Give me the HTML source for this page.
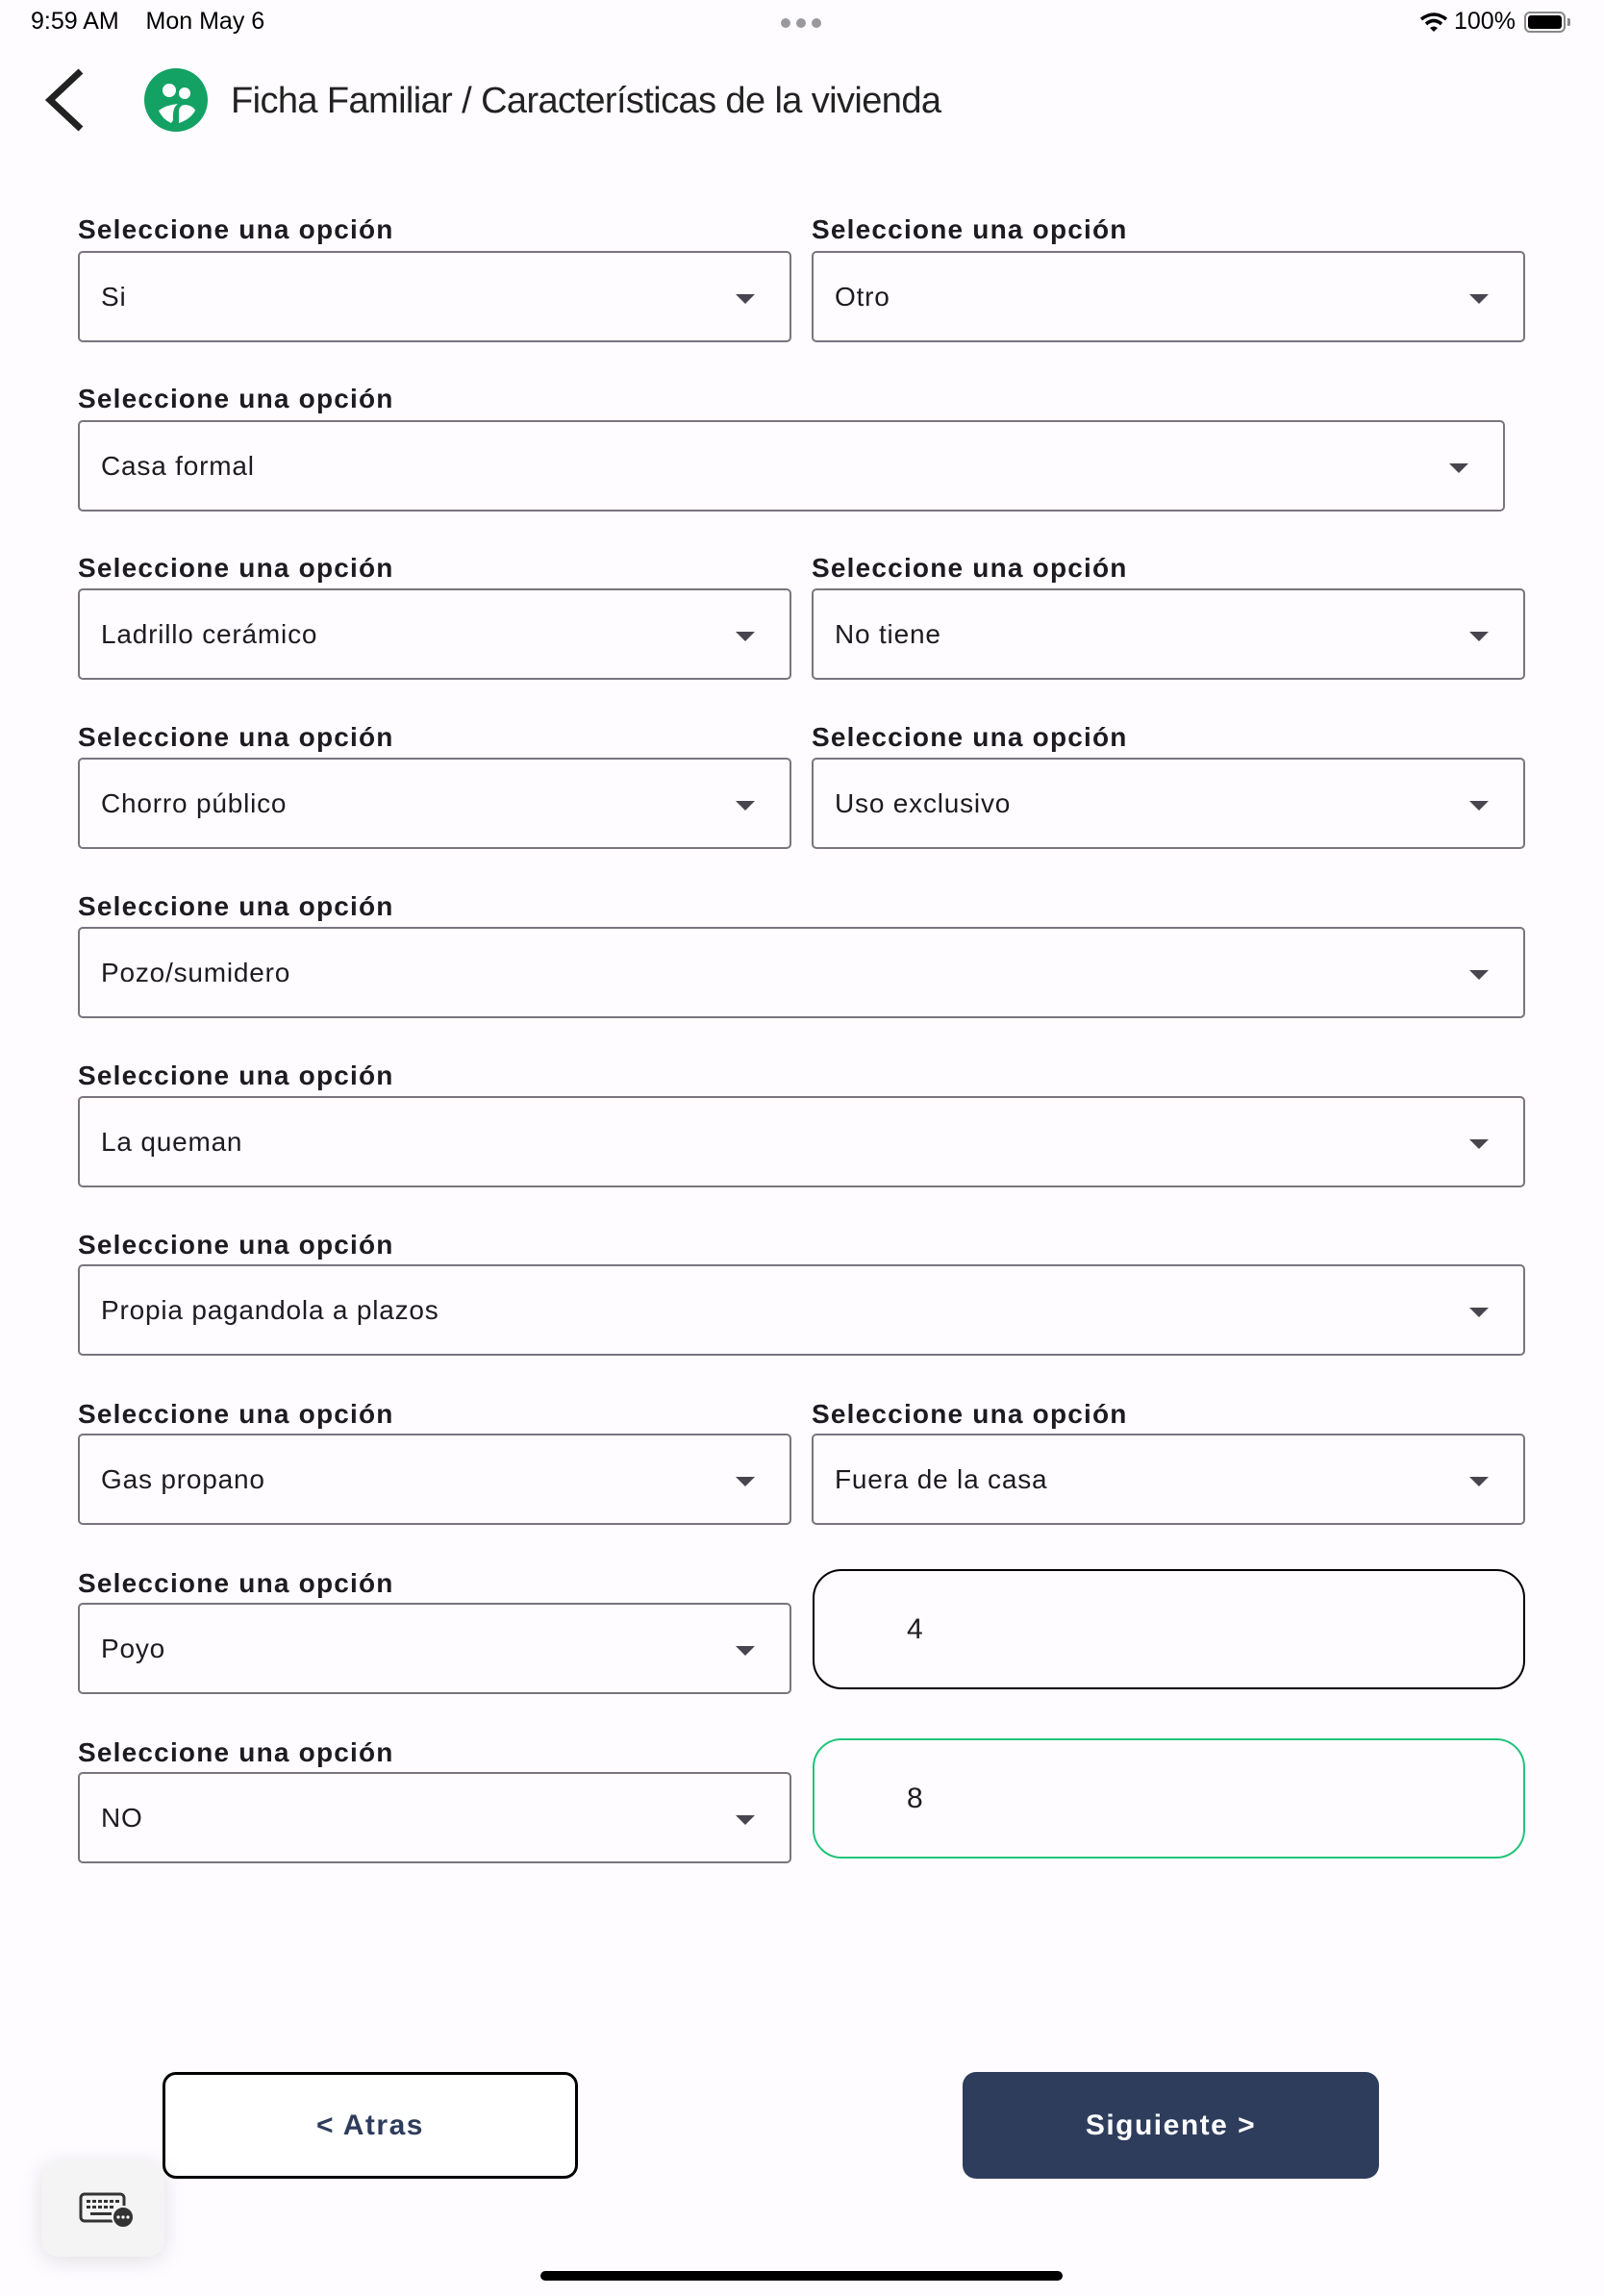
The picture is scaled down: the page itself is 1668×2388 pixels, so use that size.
<!DOCTYPE html>
<html><head><meta charset="utf-8"><style>
*{margin:0;padding:0;box-sizing:border-box}
body{width:1668px;height:2388px;background:#fefcff;position:relative;overflow:hidden;font-family:"Liberation Sans",sans-serif;color:#1d1b20}
.a{position:absolute}
.lbl{position:absolute;font-size:28px;font-weight:bold;letter-spacing:1.2px;color:#1d1b20;line-height:32px}
.sel{position:absolute;height:95px;border:2px solid #79747e;border-radius:5px;font-size:28px;letter-spacing:0.8px;line-height:91px;padding-left:22px;color:#1d1b20}
.sel::after{content:"";position:absolute;right:36px;top:43px;border-left:10px solid transparent;border-right:10px solid transparent;border-top:10px solid #49454f}
.num{position:absolute;left:845px;width:741px;height:125px;border-radius:30px;font-size:30px;line-height:121px;padding-left:96px}
</style></head><body>
<div class="a" style="left:32px;top:7px;font-size:25px;line-height:30px;color:#000">9:59 AM&nbsp;&nbsp;&nbsp;&nbsp;Mon May 6</div>
<div class="a" style="left:812px;top:19px;width:44px;height:10px">
<div class="a" style="left:0;top:0;width:10px;height:10px;border-radius:50%;background:#9a9a9e"></div>
<div class="a" style="left:16px;top:0;width:10px;height:10px;border-radius:50%;background:#9a9a9e"></div>
<div class="a" style="left:32px;top:0;width:10px;height:10px;border-radius:50%;background:#9a9a9e"></div></div>
<svg class="a" style="left:1476px;top:12px" width="30" height="22" viewBox="0 0 30 22"><path d="M2 8 Q15 -2 28 8" stroke="#000" stroke-width="3.5" fill="none"/><path d="M7 13 Q15 6 23 13" stroke="#000" stroke-width="3.5" fill="none"/><path d="M11 17 L15 21 L19 17 Q15 14 11 17Z" fill="#000"/></svg>
<div class="a" style="left:1512px;top:7px;font-size:25px;line-height:30px;color:#000">100%</div>
<div class="a" style="left:1585px;top:12px;width:43px;height:22px;border:2px solid #888;border-radius:6px;padding:2px"><div style="width:100%;height:100%;background:#000;border-radius:3px"></div></div>
<div class="a" style="left:1630px;top:19px;width:3px;height:8px;background:#888;border-radius:0 2px 2px 0"></div>
<svg class="a" style="left:44px;top:70px" width="46" height="68" viewBox="0 0 46 68"><path d="M40 4 L8 34 L40 64" stroke="#222" stroke-width="7" fill="none"/></svg>
<svg class="a" style="left:149px;top:70px" width="68" height="68" viewBox="0 0 68 68"><circle cx="34" cy="34" r="33" fill="#13a263"/><circle cx="27" cy="24" r="7" fill="#fff"/><circle cx="43" cy="27" r="6" fill="#fff"/><path d="M16 45 Q24 39 36 38 Q30 42 31 55 L29 58 Q20 54 16 45Z" fill="#fff"/><path d="M37 58 L37 45 Q38 39 44 39 Q52 40 54 45 Q49 54 37 58Z" fill="#fff"/></svg>
<div class="a" style="left:240px;top:82px;font-size:38px;line-height:46px;color:#222;letter-spacing:-0.6px">Ficha Familiar / Características de la vivienda</div>

<div class="lbl" style="left:81px;top:223px">Seleccione una opción</div>
<div class="sel" style="left:81px;top:261px;width:742px">Si</div>
<div class="lbl" style="left:844px;top:223px">Seleccione una opción</div>
<div class="sel" style="left:844px;top:261px;width:742px">Otro</div>

<div class="lbl" style="left:81px;top:399px">Seleccione una opción</div>
<div class="sel" style="left:81px;top:437px;width:1484px">Casa formal</div>

<div class="lbl" style="left:81px;top:575px">Seleccione una opción</div>
<div class="sel" style="left:81px;top:612px;width:742px">Ladrillo cerámico</div>
<div class="lbl" style="left:844px;top:575px">Seleccione una opción</div>
<div class="sel" style="left:844px;top:612px;width:742px">No tiene</div>

<div class="lbl" style="left:81px;top:751px">Seleccione una opción</div>
<div class="sel" style="left:81px;top:788px;width:742px">Chorro público</div>
<div class="lbl" style="left:844px;top:751px">Seleccione una opción</div>
<div class="sel" style="left:844px;top:788px;width:742px">Uso exclusivo</div>

<div class="lbl" style="left:81px;top:927px">Seleccione una opción</div>
<div class="sel" style="left:81px;top:964px;width:1505px">Pozo/sumidero</div>

<div class="lbl" style="left:81px;top:1103px">Seleccione una opción</div>
<div class="sel" style="left:81px;top:1140px;width:1505px">La queman</div>

<div class="lbl" style="left:81px;top:1279px">Seleccione una opción</div>
<div class="sel" style="left:81px;top:1315px;width:1505px">Propia pagandola a plazos</div>

<div class="lbl" style="left:81px;top:1455px">Seleccione una opción</div>
<div class="sel" style="left:81px;top:1491px;width:742px">Gas propano</div>
<div class="lbl" style="left:844px;top:1455px">Seleccione una opción</div>
<div class="sel" style="left:844px;top:1491px;width:742px">Fuera de la casa</div>

<div class="lbl" style="left:81px;top:1631px">Seleccione una opción</div>
<div class="sel" style="left:81px;top:1667px;width:742px">Poyo</div>
<div class="num" style="top:1632px;border:2px solid #000">4</div>

<div class="lbl" style="left:81px;top:1807px">Seleccione una opción</div>
<div class="sel" style="left:81px;top:1843px;width:742px">NO</div>
<div class="num" style="top:1808px;border:2px solid #22c47a">8</div>

<div class="a" style="left:169px;top:2155px;width:432px;height:111px;border:3px solid #000;border-radius:14px;background:#fff;text-align:center;line-height:105px;font-size:30px;font-weight:bold;color:#2e3c5c;letter-spacing:1.5px">&lt; Atras</div>
<div class="a" style="left:1001px;top:2155px;width:433px;height:111px;border-radius:14px;background:#2e3d5c;text-align:center;line-height:111px;font-size:30px;font-weight:bold;color:#fff;letter-spacing:1.5px">Siguiente &gt;</div>

<div class="a" style="left:43px;top:2248px;width:128px;height:99px;border-radius:18px;background:#f4f4f5;box-shadow:0 4px 24px rgba(0,0,0,0.12)"></div>
<svg class="a" style="left:82px;top:2280px" width="60" height="38" viewBox="0 0 60 38"><rect x="2" y="2" width="45" height="28" rx="4" fill="none" stroke="#333" stroke-width="3"/><g fill="#333"><rect x="8" y="8" width="4" height="3"/><rect x="14" y="8" width="4" height="3"/><rect x="20" y="8" width="4" height="3"/><rect x="26" y="8" width="4" height="3"/><rect x="32" y="8" width="4" height="3"/><rect x="38" y="8" width="4" height="3"/><rect x="8" y="14" width="4" height="3"/><rect x="14" y="14" width="4" height="3"/><rect x="20" y="14" width="4" height="3"/><rect x="26" y="14" width="4" height="3"/><rect x="32" y="14" width="4" height="3"/><rect x="12" y="21" width="22" height="3"/></g><circle cx="46" cy="26" r="11" fill="#333" stroke="#f4f4f5" stroke-width="2"/><g fill="#fff"><circle cx="41" cy="26" r="1.6"/><circle cx="46" cy="26" r="1.6"/><circle cx="51" cy="26" r="1.6"/></g></svg>

<div class="a" style="left:562px;top:2362px;width:543px;height:10px;border-radius:5px;background:#000"></div>
</body></html>
